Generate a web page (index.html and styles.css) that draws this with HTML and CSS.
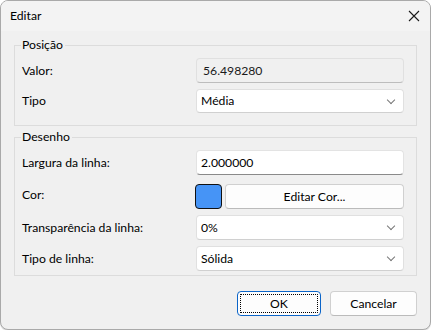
FILE: index.html
```html
<!DOCTYPE html>
<html lang="pt">
<head>
<meta charset="utf-8">
<link rel="stylesheet" href="styles.css">
</head>
<body>
<div class="window">
  <div class="titlebar">
    <span class="title">Editar</span>
    <span class="close">
      <svg width="12" height="12" viewBox="0 0 12 12"><path d="M1 1 L11 11 M11 1 L1 11" stroke="#1a1a1a" stroke-width="1.1" fill="none"/></svg>
    </span>
  </div>
  <div class="content">
    <div class="group g1">
      <span class="legend">Posição</span>
      <div class="grid">
        <label class="lbl">Valor:</label>
        <div class="field readonly h25">56.498280</div>
        <label class="lbl">Tipo</label>
        <div class="field select h24">Média<span class="chev"></span></div>
      </div>
    </div>
    <div class="group g2">
      <span class="legend">Desenho</span>
      <div class="grid">
        <label class="lbl">Largura da linha:</label>
        <div class="field input h25">2.000000</div>
        <label class="lbl">Cor:</label>
        <div class="colorrow">
          <span class="swatch"></span>
          <span class="btn editcor">Editar Cor...</span>
        </div>
        <label class="lbl">Transparência da linha:</label>
        <div class="field select h25">0%<span class="chev"></span></div>
        <label class="lbl">Tipo de linha:</label>
        <div class="field select h25">Sólida<span class="chev"></span></div>
      </div>
    </div>
    <div class="buttons">
      <span class="btn ok"><span class="focus">OK</span></span>
      <span class="btn cancel">Cancelar</span>
    </div>
  </div>
</div>
</body>
</html>
```
FILE: styles.css
```css
* { box-sizing: border-box; }
html, body { margin: 0; padding: 0; background: #ffffff; }
body {
  font-family: "Lato", "Noto Sans", sans-serif;
  font-size: 12.2px;
  color: #000;
}
.window {
  width: 431px;
  height: 330px;
  border: 1px solid #a9a9a9;
  border-radius: 8px;
  background: #f0f0f0;
  overflow: hidden;
  box-shadow: 0 1px 1px rgba(0,0,0,0.15);
}
.titlebar {
  height: 30px;
  background: #f3f3f3;
  display: flex;
  align-items: center;
  justify-content: space-between;
  padding: 0 10px 1px 9px;
}
.close { display: flex; }
.content {
  padding: 14px 13px 0 13px;
}
.group {
  position: relative;
  border: 1px solid #dcdcdc;
}
.g2 { margin-top: 11px; }
.legend {
  position: absolute;
  left: 6px;
  top: -9px;
  padding: 0 2px 0 1px;
  background: #f0f0f0;
  line-height: 16px;
}
.grid {
  display: grid;
  grid-template-columns: 174px 1fr;
  align-items: center;
  row-gap: 6px;
  padding: 12px 12px 12px 7px;
}
.g2 .grid { padding-bottom: 4px; }
.lbl { line-height: 16px; }
.field {
  position: relative;
  display: flex;
  align-items: center;
  padding: 0 0 1px 4px;
  border: 1px solid #e3e3e3;
  border-bottom-color: #8a8a8a;
  border-radius: 4px;
  background: #fff;
}
.h24 { height: 24px; }
.h25 { height: 25px; }
.readonly {
  background: #f0f0f0;
  border-color: #e0e0e0;
  border-bottom-color: #bdbdbd;
  padding-left: 6px;
  color: #1a1a1a;
}
.select { border-color: #e0e0e0; border-bottom-color: #d0d0d0; }
.chev {
  position: absolute;
  right: 9px;
  top: 7px;
  width: 6px;
  height: 6px;
  border-right: 1px solid #777;
  border-bottom: 1px solid #777;
  transform: rotate(45deg);
}
.colorrow {
  display: flex;
  gap: 3px;
  margin-left: -1px;
  margin-top: 3px;
}
.swatch {
  width: 27px;
  height: 25px;
  background: #4694f6;
  border: 1px solid #111;
  border-radius: 4px;
}
.btn {
  display: flex;
  align-items: center;
  justify-content: center;
  background: #fdfdfd;
  border: 1px solid #d0d0d0;
  border-bottom-color: #bbbbbb;
  border-radius: 4px;
  height: 25px;
}
.editcor { flex: 1; }
.buttons {
  display: flex;
  justify-content: flex-end;
  gap: 9px;
  margin-top: 15px;
}
.ok {
  width: 84px;
  height: 25px;
  border: 1px solid #0a64c8;
  padding: 2px;
}
.focus {
  width: 100%;
  height: 100%;
  display: flex;
  align-items: center;
  justify-content: center;
  border: 1px dotted #000;
  border-radius: 1px;
}
.cancel { width: 87px; height: 25px; }
```
